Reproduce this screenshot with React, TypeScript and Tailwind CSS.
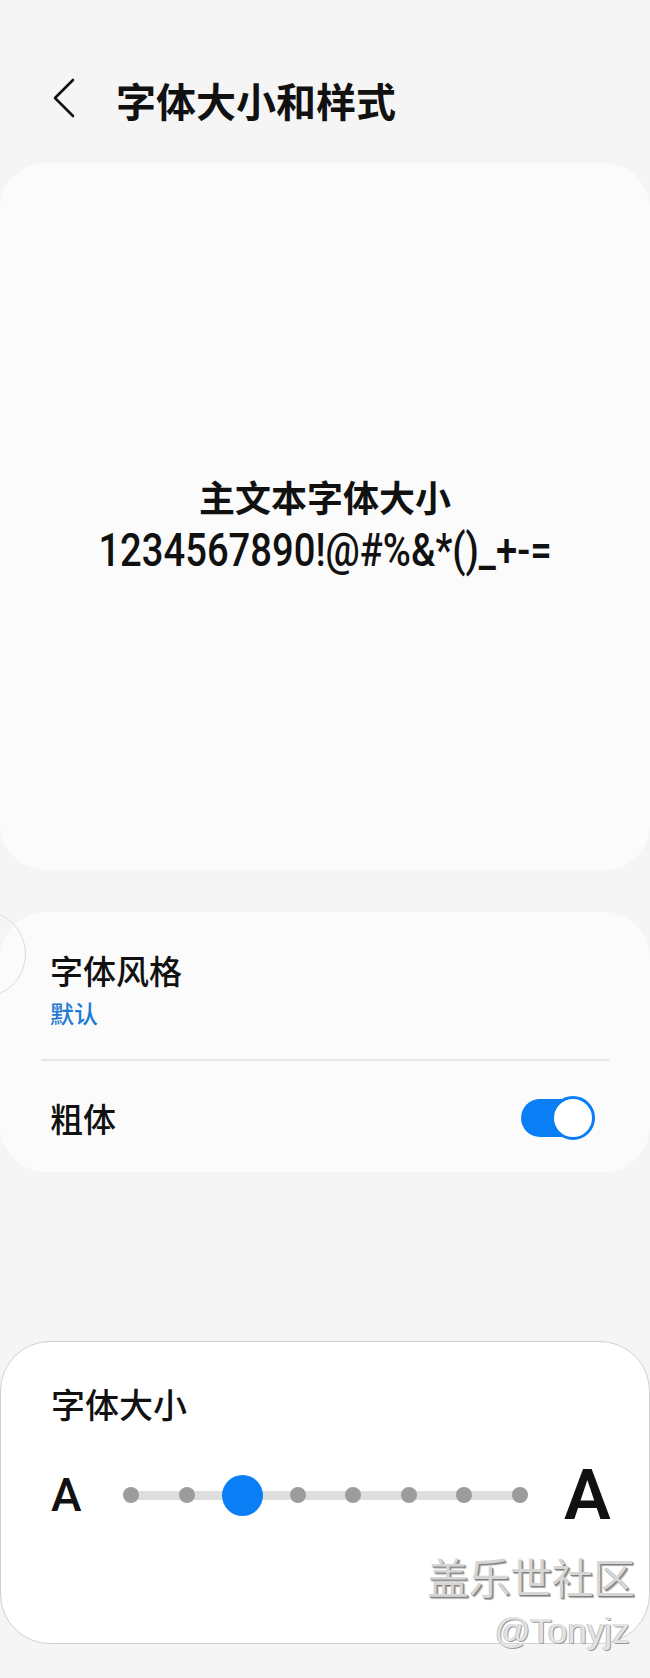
const dots = [0, 1, 2, 3, 4, 5, 6, 7];

const Toggle = () => (
  <div className="relative h-[44px] w-[74px]">
    <div className="absolute left-0 top-[3px] h-[38px] w-[68px] rounded-full bg-[#0a7ff5]" />
    <div className="absolute right-0 top-0 h-[44px] w-[44px] rounded-full border-[3px] border-[#0a7ff5] bg-white" />
  </div>
);

const SizeSlider = ({ value }: { value: number }) => (
  <div className="relative flex h-[41px] w-[405px] items-center">
    <div className="absolute left-[8px] right-[8px] top-[16px] h-[9px] rounded-full bg-[#dedede]" />
    <div className="relative flex w-full items-center justify-between">
      {dots.map((d) => (
        <div key={d} className="h-[16px] w-[16px] rounded-full bg-[#9c9c9c]" />
      ))}
    </div>
    {/* thumb */}
    <div
      className="absolute top-0 h-[41px] w-[41px] rounded-full bg-[#0a7ff5]"
      style={{ left: 8 + (389 / 7) * value - 20.5 }}
    />
  </div>
);

const App = () => {
  return (
    <div className="relative min-h-[1678px] w-full overflow-hidden bg-[#f5f5f5] font-['Noto_Sans_CJK_SC',sans-serif] text-[#111]">
      {/* header */}
      <div className="h-[163px] pt-[78px]">
        <div className="flex h-[44px] items-center pl-[52px]">
          <svg width="24" height="40" viewBox="0 0 24 40" fill="none" className="-mt-[4px]">
            <polyline points="21,2 3,20 21,38" stroke="#111" strokeWidth="2.6" strokeLinecap="round" strokeLinejoin="round" />
          </svg>
          <div className="ml-[40px] text-[40px] font-bold leading-[44px]">字体大小和样式</div>
        </div>
      </div>

      {/* preview */}
      <div className="flex h-[707px] flex-col items-center justify-center rounded-[46px] bg-[#fbfbfb] pt-[12px]">
        <div className="text-[36px] font-bold leading-[54px]">主文本字体大小</div>
        <div className="scale-x-[0.83] font-['Roboto',sans-serif] text-[46px] font-medium leading-[54px] whitespace-nowrap">
          1234567890!@#%&amp;*()_+-=
        </div>
      </div>

      {/* style options */}
      <div className="mt-[42px] rounded-[46px] bg-[#fbfbfb] pt-[38px] pb-[32px]">
        <div className="pl-[50px]">
          <div className="text-[33px] font-medium leading-[40px]">字体风格</div>
          <div className="mt-[8px] text-[24px] font-medium leading-[30px] text-[#1f7ad2]">默认</div>
        </div>
        <div className="mx-[41px] mt-[31px] h-[2px] bg-[#e6e6e6]" />
        <div className="mt-[35px] flex h-[44px] items-center justify-between pl-[50px] pr-[55px]">
          <div className="text-[33px] font-medium leading-[40px]">粗体</div>
          <Toggle />
        </div>
      </div>

      {/* font size */}
      <div className="mt-[169px] h-[303px] rounded-[50px] border border-[#d0d0d0] bg-white pt-[42px]">
        <div className="pl-[50px] text-[34px] font-medium leading-[40px]">字体大小</div>
        <div className="mt-[41px] flex h-[60px] items-center pl-[50px]">
          <div className="w-[31px] font-['Roboto',sans-serif] text-[46px] font-medium leading-none">A</div>
          <div className="ml-[41px]">
            <SizeSlider value={2} />
          </div>
          <div className="ml-[36px] w-[46px] font-['Roboto',sans-serif] text-[70px] font-semibold leading-none">A</div>
        </div>
      </div>

      {/* stray floating button outline */}
      <div className="absolute left-[-62px] top-[910px] h-[88px] w-[88px] rounded-full border-[1.5px] border-[#dadada]" />

      {/* watermark */}
      <div className="absolute left-[427px] top-[1555px] text-[42px] leading-none tracking-[-0.5px] text-[#d6d6d6] [text-shadow:1px_1px_0_#808080,2px_2px_1px_#aaaaaa]">
        盖乐世社区
      </div>
      <div className="absolute left-[495px] top-[1613px] font-['Liberation_Sans',sans-serif] text-[35px] leading-none text-[#e4e4e4] [text-shadow:1px_1px_0_#9a9a9a,-1px_0_0_#c4c4c4]">
        @Tonyjz
      </div>
    </div>
  );
};

export default App;
